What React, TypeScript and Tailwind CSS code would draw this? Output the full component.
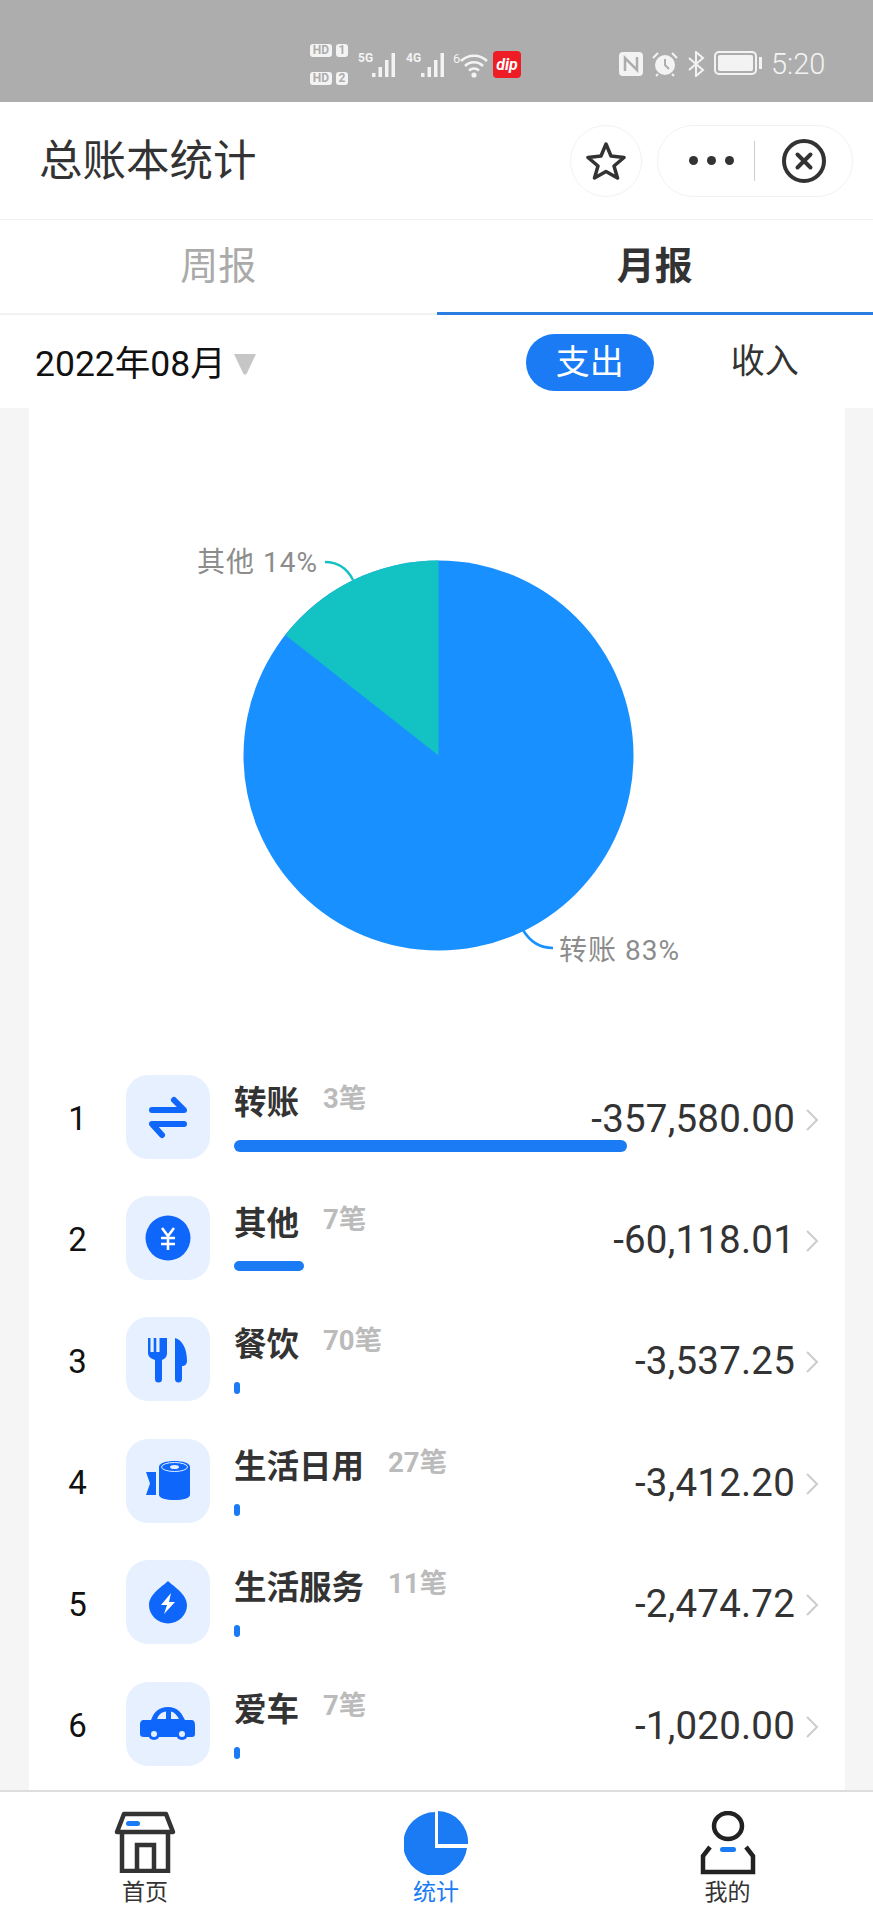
const rows = [
  { name: "转账", count: "3笔", amount: "-357,580.00", bar: "w-[393px] h-[12px]", icon: "transfer" },
  { name: "其他", count: "7笔", amount: "-60,118.01", bar: "w-[70px] h-[10px]", icon: "yen" },
  { name: "餐饮", count: "70笔", amount: "-3,537.25", bar: "w-[6px] h-[12px]", icon: "food" },
  { name: "生活日用", count: "27笔", amount: "-3,412.20", bar: "w-[6px] h-[12px]", icon: "roll" },
  { name: "生活服务", count: "11笔", amount: "-2,474.72", bar: "w-[6px] h-[12px]", icon: "drop" },
  { name: "爱车", count: "7笔", amount: "-1,020.00", bar: "w-[6px] h-[12px]", icon: "car" },
];

const RowIcon = ({ name }: { name: string }) => {
  const blue = "#0e66fb";
  return (
    <svg viewBox="0 0 84 84" className="w-[84px] h-[84px]">
      {name === "transfer" && (
        <g fill="none" stroke={blue} strokeWidth="6" strokeLinecap="round" strokeLinejoin="round">
          <path d="M26 35H58L48 25" />
          <path d="M58 49H26L36 60" />
        </g>
      )}
      {name === "yen" && (
        <g>
          <circle cx="42" cy="42" r="22.5" fill={blue} />
          <path d="M36 32L42 40L48 32M35 42H49M35 48H49M42 40V54" fill="none" stroke="#fff" strokeWidth="2.6" />
        </g>
      )}
      {name === "food" && (
        <g fill={blue}>
          <path d="M22 21h2.5v14h3.2V21h2.6v14h3.2V21H36v0h2.5v0H41v15c0 4-2.5 6-5 7v19a3.5 3.5 0 0 1-7 0V43c-3-1-7-3-7-7z" />
          <path d="M49 21c7 2 12 10 12 23c0 3-2 5-5 5v13a3.5 3.5 0 0 1-7 0z" />
        </g>
      )}
      {name === "roll" && (
        <g>
          <path d="M33 28c0-4 7-6 15.500-6S64 24 64 28v28c0 3-7 5-15.500 5S33 59 33 56z" fill={blue} />
          <ellipse cx="48.500" cy="28" rx="13" ry="4.500" fill={blue} stroke="#e6f0fe" strokeWidth="1" />
          <ellipse cx="48.500" cy="28" rx="4.500" ry="2" fill="#e6f0fe" />
          <path d="M20 33H30V56H20L24 44.500z" fill={blue} />
        </g>
      )}
      {name === "drop" && (
        <g>
          <path d="M42 21C47 26 61 34 61 45A19 18.500 0 0 1 23 45C23 34 37 26 42 21z" fill={blue} />
          <path d="M45 33L35 45H41L38 54L49 42H43z" fill="#fff" />
        </g>
      )}
      {name === "car" && (
        <g>
          <path d="M18 38H25C28 30 33 25 42 25C51 25 55 30 59 38H65C68 38 69 40 69 43V52C69 54 68 55 66 55H18C15 55 14 54 14 52V43C14 40 15 38 18 38z" fill={blue} />
          <path d="M31 37C33 32 36 30 40 29.500V37zM45 29.500C48 30 51 33 53 37H45z" fill="#e6f0fe" />
          <circle cx="28" cy="52" r="6" fill={blue} />
          <circle cx="28" cy="52" r="3" fill="#e6f0fe" />
          <circle cx="56" cy="52" r="6" fill={blue} />
          <circle cx="56" cy="52" r="3" fill="#e6f0fe" />
        </g>
      )}
    </svg>
  );
};

const Bars = () => (
  <svg viewBox="0 0 26 26" className="w-[26px] h-[26px]">
    <g fill="#f3f3f3">
      <rect x="1" y="21" width="3.500" height="4" />
      <rect x="7.500" y="15" width="3.500" height="10" />
      <rect x="14" y="8" width="3.500" height="17" />
      <rect x="20.500" y="1" width="3.500" height="24" />
    </g>
  </svg>
);

const StatusBar = () => (
  <div className="h-[102px] bg-[#adadad] flex items-end pb-[18px] pl-[310px] text-[#f3f3f3]">
    <div className="flex flex-col gap-[15px] mb-[-1px]">
      {["1", "2"].map((n) => (
        <div key={n} className="flex gap-[4px] font-bold text-[12px] leading-[13px] text-[#adadad]">
          <span className="w-[22px] h-[13px] bg-[#f3f3f3] rounded-[3px] text-center">HD</span>
          <span className="w-[12px] h-[13px] bg-[#f3f3f3] rounded-[3px] text-center">{n}</span>
        </div>
      ))}
    </div>
    <div className="ml-[10px] flex items-end mb-[6px]">
      <span className="text-[12px] leading-[12px] font-bold mb-[14px] w-[13px] whitespace-nowrap">5G</span>
      <Bars />
      <span className="ml-[9px] text-[12px] leading-[12px] font-bold mb-[14px] w-[14px] whitespace-nowrap">4G</span>
      <Bars />
      <span className="ml-[7px] w-[7px] text-[13px] leading-[13px] mb-[13px]">6</span>
      <svg viewBox="0 0 30 26" className="w-[30px] h-[26px]">
        <g fill="none" stroke="#f3f3f3" strokeWidth="2.600">
          <path d="M1 9C8 2 20 2 27 9" />
          <path d="M5 14C10 9 18 9 23 14" />
          <path d="M9 18.500C12 16 16 16 19 18.500" />
        </g>
        <circle cx="14" cy="23" r="2.600" fill="#f3f3f3" />
      </svg>
    </div>
    <div className="ml-[3px] mb-[6px] w-[28px] h-[27px] bg-[#ee1c25] rounded-[4px] flex items-center justify-center italic font-bold text-white text-[16px] leading-none">
      dip
    </div>
    <svg viewBox="0 0 24 24" className="ml-[98px] mb-[8px] w-[24px] h-[24px]">
      <rect width="24" height="24" rx="4" fill="#f3f3f3" />
      <path d="M6 19V6L18 18V5" fill="none" stroke="#adadad" strokeWidth="2.500" />
    </svg>
    <svg viewBox="0 0 26 26" className="ml-[9px] mb-[7px] w-[26px] h-[26px]">
      <circle cx="13" cy="14" r="10" fill="#f3f3f3" />
      <path d="M13 8V14L17 18" fill="none" stroke="#adadad" strokeWidth="2" />
      <path d="M1 7L6 2M25 7L20 2M6 23L4 25M20 23L22 25" stroke="#f3f3f3" strokeWidth="2" />
    </svg>
    <svg viewBox="0 0 18 26" className="ml-[9px] mb-[7px] w-[18px] h-[26px]">
      <path d="M2 7L16 19L9 25V1L16 7L2 19" fill="none" stroke="#f3f3f3" strokeWidth="2" />
    </svg>
    <div className="ml-[9px] mb-[9px] flex items-center">
      <div className="w-[43px] h-[24px] border-2 border-[#f3f3f3] rounded-[5px] p-[2px]">
        <div className="w-full h-full bg-[#f3f3f3] rounded-[2px]" />
      </div>
      <div className="ml-[2px] w-[3px] h-[12px] bg-[#f3f3f3]" />
    </div>
    <span className="ml-[9px] mb-[6px] text-[29px] leading-[28px] font-light">5:20</span>
  </div>
);

const NavBar = () => (
  <div className="h-[118px] shrink-0 bg-white border-b border-[#f2f2f2] flex items-center pl-[39px] pr-[20px]">
    <h1 className="flex-1 text-[43.500px] leading-[50px] text-[#333] mt-[2px]">总账本统计</h1>
    <div className="w-[72px] h-[72px] rounded-full border border-[#f2f2f2] flex items-center justify-center">
      <svg viewBox="0 0 40 40" className="w-[40px] h-[40px]">
        <path d="M20 3L25 15L38 16.500L28 25L31.500 37L20 30.500L8.500 37L12 25L2 16.500L15 15z" fill="none" stroke="#333" strokeWidth="3.500" strokeLinejoin="round" />
      </svg>
    </div>
    <div className="ml-[15px] w-[196px] h-[72px] rounded-full border border-[#f2f2f2] flex items-center pl-[31px]">
      <div className="flex gap-[9px]">
        <span className="w-[9px] h-[9px] rounded-full bg-[#333]" />
        <span className="w-[9px] h-[9px] rounded-full bg-[#333]" />
        <span className="w-[9px] h-[9px] rounded-full bg-[#333]" />
      </div>
      <div className="ml-[20px] w-px h-[40px] bg-[#ccc]" />
      <svg viewBox="0 0 44 44" className="ml-[27px] w-[44px] h-[44px]">
        <circle cx="22" cy="22" r="20" fill="none" stroke="#333" strokeWidth="4" />
        <path d="M15.500 15.500L28.500 28.500M28.500 15.500L15.500 28.500" stroke="#333" strokeWidth="4" strokeLinecap="round" />
      </svg>
    </div>
  </div>
);

const Tabs = () => (
  <div className="h-[95px] shrink-0 bg-white flex border-b-2 border-[#f2f2f2] text-[38px]">
    <div className="flex-1 flex items-center justify-center text-[#aaa]">周报</div>
    <div className="flex-1 flex items-center justify-center font-bold text-[#333] border-b-[3px] border-[#2a7de1] -mb-[2px]">月报</div>
  </div>
);

const FilterRow = () => (
  <div className="h-[93px] shrink-0 bg-white flex items-center pl-[35px]">
    <span className="text-[35.500px] leading-[40px] text-[#111] mt-[4px]">2022年08月</span>
    <svg viewBox="0 0 24 22" className="ml-[7px] mt-[4px] w-[24px] h-[22px]">
      <path d="M1 1H23L14 20C13 22 11 22 10 20z" fill="#c6c6c6" />
    </svg>
    <div className="ml-[269px] w-[128px] h-[57px] mt-[2px] rounded-full bg-[#1a7bf5] text-white text-[34px] flex items-center justify-center">
      支出
    </div>
    <span className="ml-[77px] text-[34px] leading-[40px] text-[#333] -mt-[2px]">收入</span>
  </div>
);

const PieChart = () => (
  <svg viewBox="0 0 816 648" className="block w-[816px] h-[648px]">
    <circle cx="409.500" cy="347.500" r="195" fill="#1890ff" />
    <path d="M409.500 347.500V152.500A195 195 0 0 0 256.300 226.900z" fill="#13c2c2" />
    <path d="M296 154C310 154 319 162 324 172" fill="none" stroke="#13c2c2" strokeWidth="2.500" />
    <path d="M494 522C500 532 510 540 524 540" fill="none" stroke="#1890ff" strokeWidth="2.500" />
    <text x="168" y="164" fontSize="28" letterSpacing="1" fill="#8c8c8c">其他 14%</text>
    <text x="530" y="552" fontSize="28" letterSpacing="1" fill="#8c8c8c">转账 83%</text>
  </svg>
);

const CategoryRow = ({ row, index }: { row: (typeof rows)[number]; index: number }) => (
  <div className="h-[121.4px] flex items-center">
    <span className="w-[97px] text-center text-[33px] text-[#111] mt-[4px]">{index + 1}</span>
    <div className="w-[84px] h-[84px] rounded-[22px] bg-[#e6f0fe]">
      <RowIcon name={row.icon} />
    </div>
    <div className="ml-[24px] flex-1 pr-[26px]">
      <div className="h-[55px] flex items-start">
        <span className="text-[32.500px] leading-[36px] font-bold text-[#333] mt-[3px]">{row.name}</span>
        <span className="ml-[24px] text-[27.500px] leading-[30px] font-bold text-[#bbb] mt-[2px]">{row.count}</span>
        <span className="ml-auto text-[38.500px] leading-[44px] tracking-[0.2px] text-[#333] self-end mb-[-4px]">{row.amount}</span>
        <svg viewBox="0 0 14 24" className="ml-[10px] w-[14px] h-[24px] self-end mb-[5px]">
          <path d="M2 2L12 12L2 22" fill="none" stroke="#ccc" strokeWidth="2" />
        </svg>
      </div>
      <div className="mt-[3px] h-[12px]">
        <div className={`${row.bar} rounded-full bg-[#1a7bf5]`} />
      </div>
    </div>
  </div>
);

const BottomBar = () => (
  <div className="h-[130px] shrink-0 bg-white border-t-2 border-[#ddd] flex pt-[19px] text-[23px] leading-[28px]">
    <div className="w-[290px] flex flex-col items-center">
      <svg viewBox="0 0 62 62" className="w-[62px] h-[62px]">
        <path d="M10 3H52L59 21H3z" fill="none" stroke="#333" strokeWidth="4.500" strokeLinejoin="round" />
        <path d="M8 22V60H54V22" fill="none" stroke="#333" strokeWidth="4.500" />
        <path d="M23 60V34H40V60" fill="none" stroke="#333" strokeWidth="4.500" />
        <rect x="12" y="10" width="14" height="5" rx="2.500" fill="#1a7bf5" />
      </svg>
      <span className="mt-[6px] text-[#333]">首页</span>
    </div>
    <div className="w-[292px] flex flex-col items-center">
      <svg viewBox="0 0 64 64" className="w-[64px] h-[64px]">
        <path d="M31 1V37H63A32 32 0 1 1 31 1z" fill="#1a7bf5" />
        <path d="M34 0A31 31 0 0 1 64 33H34z" fill="#1a7bf5" />
      </svg>
      <span className="mt-[4px] text-[#1a7bf5]">统计</span>
    </div>
    <div className="flex-1 flex flex-col items-center">
      <svg viewBox="0 0 56 64" className="w-[56px] h-[64px]">
        <ellipse cx="28" cy="15" rx="14" ry="13" fill="none" stroke="#222" strokeWidth="4.500" />
        <path d="M10 36L3 45V61H53V45L46 36" fill="none" stroke="#222" strokeWidth="4.500" />
        <rect x="20" y="36" width="16" height="5" rx="2.500" fill="#1a7bf5" />
      </svg>
      <span className="mt-[4px] text-[#333]">我的</span>
    </div>
  </div>
);

export default function App() {
  return (
    <div className="h-[1920px] w-[873px] flex flex-col overflow-hidden bg-white font-['Roboto','Noto_Sans_CJK_SC',sans-serif]">
      <StatusBar />
      <NavBar />
      <Tabs />
      <FilterRow />
      <div className="flex-1 min-h-0 bg-[#f5f5f5] overflow-hidden">
        <div className="ml-[29px] w-[816px] h-full bg-white">
          <PieChart />
          {rows.map((row, i) => (
            <CategoryRow key={row.name} row={row} index={i} />
          ))}
        </div>
      </div>
      <BottomBar />
    </div>
  );
}
